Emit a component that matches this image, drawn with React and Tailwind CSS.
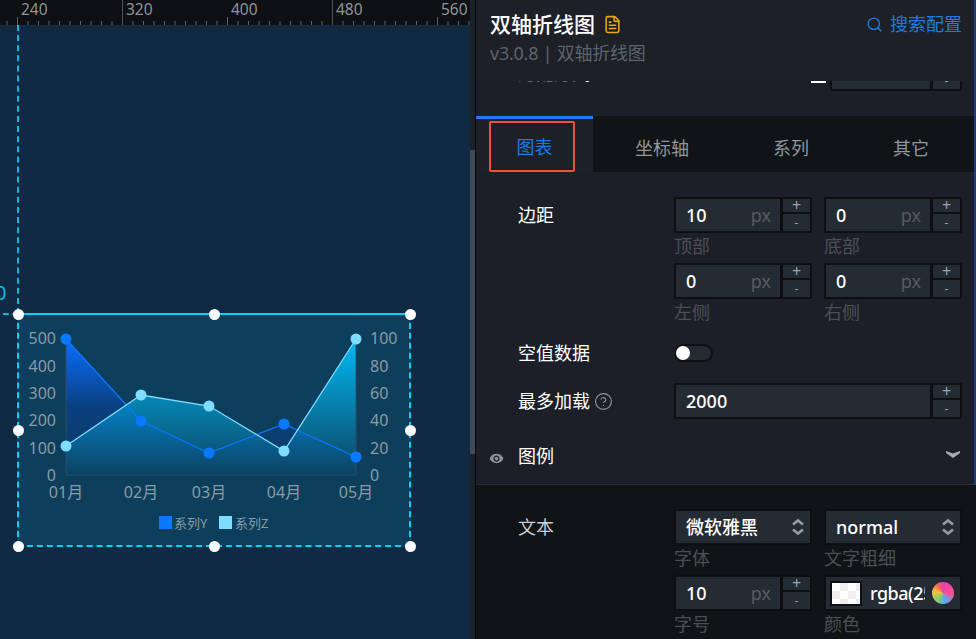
import { CircleHelp, FileText, Search } from "lucide-react";
import { MdRemoveRedEye } from "react-icons/md";

const FONT = "font-['Noto_Sans','Noto_Sans_CJK_SC',sans-serif]";

const MONTHS = ["01月", "02月", "03月", "04月", "05月"];
const XS = [66, 141, 209, 284, 356];
const SERIES_Y = [339, 421, 453, 424, 457];
const SERIES_Z = [446, 395, 406, 451, 339];
const LEFT_AXIS = [["500", 338], ["400", 366], ["300", 393], ["200", 420], ["100", 448], ["0", 475]];
const RIGHT_AXIS = [["100", 338], ["80", 366], ["60", 393], ["40", 420], ["20", 448], ["0", 475]];

const points = (ys) => ys.map((y, i) => `${XS[i]},${y}`).join(" ");

function Ruler() {
  const ticks = [];
  for (let i = -1; i < 44; i++) ticks.push(17.5 + i * 10.5);
  return (
    <div className="relative h-[25px] bg-[#0e1013]">
      <svg className="absolute inset-0" width="470" height="25">
        {ticks.map((x, i) => (
          <line key={i} x1={x} x2={x} y1="21" y2="25" stroke="#59626c" />
        ))}
        {[17.5, 227.5, 437.5].map((x) => (
          <line key={x} x1={x} x2={x} y1="17" y2="25" stroke="#59626c" />
        ))}
        {[122.5, 332.5].map((x) => (
          <line key={x} x1={x} x2={x} y1="0" y2="25" stroke="#4a5360" />
        ))}
      </svg>
      {[["240", 21], ["320", 126], ["400", 231], ["480", 336], ["560", 441]].map(([label, x]) => (
        <span
          key={label}
          className="absolute top-0 text-[15.5px] leading-[18px] text-[#8d949b]"
          style={{ left: x }}
        >
          {label}
        </span>
      ))}
    </div>
  );
}

function Chart() {
  return (
    <svg viewBox="19 315 390 230" className="block h-full w-full">
      <defs>
        <linearGradient id="areaY" x1="0" y1="0" x2="0" y2="1">
          <stop offset="0" stopColor="#0a6eff" />
          <stop offset="0.5" stopColor="#0a3f80" />
          <stop offset="1" stopColor="#0a3f80" stopOpacity="0" />
        </linearGradient>
        <linearGradient id="areaZ" x1="0" y1="0" x2="0" y2="1">
          <stop offset="0" stopColor="#00baf5" />
          <stop offset="1" stopColor="#00baf5" stopOpacity="0.03" />
        </linearGradient>
      </defs>
      <polygon points={`66,475 ${points(SERIES_Y)} 356,475`} fill="url(#areaY)" />
      <polygon points={`66,475 ${points(SERIES_Z)} 356,475`} fill="url(#areaZ)" />
      <polyline points="66,339 66,475 356,475 356,339" fill="none" stroke="#29506a" strokeWidth="1" />
      <polyline points={points(SERIES_Y)} fill="none" stroke="#0a78ff" strokeWidth="1.3" />
      <polyline points={points(SERIES_Z)} fill="none" stroke="#7fdcff" strokeWidth="1.3" />
      {XS.map((x, i) => (
        <circle key={x} cx={x} cy={SERIES_Y[i]} r="5.5" fill="#0a78ff" />
      ))}
      {XS.map((x, i) => (
        <circle key={x} cx={x} cy={SERIES_Z[i]} r="5.5" fill="#7fdcff" />
      ))}
      <g fill="#8a9aa6" fontSize="16">
        {LEFT_AXIS.map(([label, y]) => (
          <text key={label} x="56" y={y + 6} textAnchor="end">{label}</text>
        ))}
        {RIGHT_AXIS.map(([label, y]) => (
          <text key={label} x="370" y={y + 6}>{label}</text>
        ))}
        {MONTHS.map((label, i) => (
          <text key={label} x={XS[i]} y="498" textAnchor="middle">{label}</text>
        ))}
      </g>
      <rect x="159" y="516" width="13" height="13" fill="#0a78ff" />
      <rect x="219" y="516" width="13" height="13" fill="#7fdcff" />
      <g fill="#8a9aa6" fontSize="13">
        <text x="174" y="528">系列Y</text>
        <text x="235" y="528">系列Z</text>
      </g>
    </svg>
  );
}

function Handle({ className }) {
  return <span className={`absolute h-[11px] w-[11px] rounded-full bg-white ${className}`} />;
}

function Canvas() {
  return (
    <div className="relative w-[470px] flex-1 overflow-hidden bg-[#0f2a42]">
      <div className="absolute left-[17px] top-0 h-[289px] border-l-2 border-dashed border-[#00bde0]" />
      <div className="absolute left-[3px] top-[288px] w-[15px] border-t-2 border-dashed border-[#00bde0]" />
      <span className="absolute left-[-5px] top-[256px] text-[20px] leading-6 text-[#00c4e8]">0</span>
      <div className="absolute left-[17px] top-[288px] h-[234px] w-[394px] border-2 border-dashed border-[#00d4f5] bg-[#0d3f5c]">
        <div className="absolute left-[-2px] right-[-2px] top-[-2px] h-[2px] bg-[#00d4f5]" />
        <Chart />
        <Handle className="left-[-6px] top-[-6px]" />
        <Handle className="left-[190px] top-[-6px]" />
        <Handle className="right-[-7px] top-[-6px]" />
        <Handle className="left-[-6px] top-[110px]" />
        <Handle className="right-[-7px] top-[110px]" />
        <Handle className="bottom-[-7px] left-[-6px]" />
        <Handle className="bottom-[-7px] left-[190px]" />
        <Handle className="bottom-[-7px] right-[-7px]" />
      </div>
    </div>
  );
}

function StepButtons() {
  return (
    <div className="flex w-[30px] flex-col border-2 border-l-[1px] border-[#0e0f12] bg-[#252b33] text-[#9aa3ab]">
      <span className="flex h-[15px] items-center justify-center border-b-2 border-[#0e0f12] text-[16px] leading-[13px]">+</span>
      <span className="flex flex-1 items-center justify-center text-[12px] leading-[13px]">-</span>
    </div>
  );
}

function NumberField({ value, unit, hint, wide }) {
  return (
    <div className={wide ? "w-[288px]" : "w-[138px]"}>
      <div className="flex h-9">
        <div className="flex flex-1 items-center justify-between border-2 border-[#0e0f12] bg-[#252b33] pl-[10px] pr-[9px] text-[18px] font-medium text-white">
          <span>{value}</span>
          {unit && <span className="font-normal text-[#565c63]">{unit}</span>}
        </div>
        <StepButtons />
      </div>
      {hint && <p className="pb-1 text-[18px] leading-[26px] text-[#4b4f55]">{hint}</p>}
    </div>
  );
}

function SelectField({ value, hint }) {
  return (
    <div className="w-[138px]">
      <div className="flex h-9 items-center justify-between border-2 border-[#0e0f12] bg-[#252b33] pl-[10px] pr-[5px] text-[18px] font-medium text-white">
        <span>{value}</span>
        <svg width="14" height="18" viewBox="0 0 14 18" fill="none" stroke="#939da6" strokeWidth="2.6">
          <path d="M2 6.5 7 2.5 12 6.5" />
          <path d="M2 11.5 7 15.5 12 11.5" />
        </svg>
      </div>
      <p className="pb-1 text-[18px] leading-[26px] text-[#4b4f55]">{hint}</p>
    </div>
  );
}

function ColorField({ value, hint }) {
  return (
    <div className="w-[138px]">
      <div className="flex h-9 items-center border-2 border-[#0e0f12] bg-[#252b33] pl-1 pr-[6px]">
        <div className="h-[25px] w-8 shrink-0 border-2 border-[#0e0f12] bg-white bg-[repeating-conic-gradient(#eeeeee_0_25%,#ffffff_0_50%)] bg-[length:16px_16px]" />
        <span className="ml-2 w-[55px] overflow-hidden whitespace-nowrap text-[18px] font-medium tracking-[-0.5px] text-white">{value}</span>
        <span className="ml-auto h-[22px] w-[22px] shrink-0 rounded-full bg-[conic-gradient(#e83fb0,#ff4f8f_25%,#5aa8f5_45%,#8fd06a_62%,#f5c040_78%,#f06a50_90%,#e83fb0)]" />
      </div>
      <p className="pb-1 text-[18px] leading-[26px] text-[#4b4f55]">{hint}</p>
    </div>
  );
}

function Row({ label, children, className = "" }) {
  return (
    <div className={`flex ${className}`}>
      <div className="w-[198px] shrink-0 pl-[42px] text-[18px] leading-9">{label}</div>
      {children}
    </div>
  );
}

function Panel() {
  return (
    <div className="relative flex w-[500px] flex-col overflow-hidden bg-[#1c1f27]">
      <div className="absolute bottom-[154px] right-0 top-0 w-[2px] bg-[#1a3a7c]" />
      <header className="flex h-[81px] shrink-0 justify-between bg-[#1d2026] pl-[14px] pr-[14px] pt-[9px]">
        <div>
          <div className="flex items-center gap-2 text-[21px] font-medium leading-[30px] text-white">
            双轴折线图
            <FileText size={19} strokeWidth={2} className="text-[#e6a817]" aria-hidden="true" />
          </div>
          <p className="text-[18px] leading-[28px] tracking-[-0.25px] text-[#5b646c]">v3.0.8 | 双轴折线图</p>
        </div>
        <div className="flex h-[30px] items-center gap-[7px] text-[18px] text-[#1f7ae0]">
          <Search size={17} aria-hidden="true" />
          搜索配置
        </div>
      </header>

      <div className="h-[35px] shrink-0 overflow-hidden">
        <div className="-mt-[26px] flex h-9 pl-[42px] pr-[14px] text-[18px] leading-[36px] text-white">
          <span>适配方式</span>
          <div className="ml-auto flex">
            <div className="mr-1 mt-[26px] h-[2px] w-[15px] bg-white" />
            <div className="w-[102px] border-2 border-[#0e0f12] bg-[#252b33]" />
            <StepButtons />
          </div>
        </div>
      </div>

      <nav className="flex h-[56px] shrink-0 bg-[#111417] text-[18px] text-[#8e979f]">
        <div className="relative flex w-[117px] items-center justify-center border-t-[3px] border-[#1f7aff] bg-[#1d2026] pt-[3px] text-[#1f7ae0]">
          图表
          <div className="absolute bottom-0 left-[13px] top-[2px] w-[86px] rounded-[2px] border-2 border-[#e8553a]" />
        </div>
        <div className="flex w-[138px] items-center justify-center pt-2">坐标轴</div>
        <div className="flex w-[120px] items-center justify-center pt-2">系列</div>
        <div className="flex w-[120px] items-center justify-center pt-2">其它</div>
      </nav>

      <section className="h-[313px] shrink-0 border-b border-[#2a2d33] pt-[25px] text-white">
        <Row label="边距">
          <div className="grid w-[288px] grid-cols-2 gap-x-3">
            <NumberField value="10" unit="px" hint="顶部" />
            <NumberField value="0" unit="px" hint="底部" />
            <NumberField value="0" unit="px" hint="左侧" />
            <NumberField value="0" unit="px" hint="右侧" />
          </div>
        </Row>
        <Row label="空值数据" className="h-12 items-center">
          <div className="flex h-[18px] w-[39px] items-center rounded-full border-2 border-[#0e0f12] bg-[#252b33]">
            <span className="h-[14px] w-[14px] rounded-full bg-white" />
          </div>
        </Row>
        <Row
          label={
            <span className="flex items-center gap-1">
              最多加载
              <CircleHelp size={19} strokeWidth={1.5} className="text-[#8a939b]" aria-hidden="true" />
            </span>
          }
          className="h-12 items-center"
        >
          <NumberField value="2000" wide />
        </Row>
        <div className="relative flex h-[59px] items-center pl-[42px] pr-[16px] pt-1 text-[18px]">
          <MdRemoveRedEye size={15} className="absolute left-[13px] top-[26px] text-[#8a939b]" aria-hidden="true" />
          图例
          <svg className="mb-1 ml-auto" width="14" height="7" viewBox="0 0 14 7" fill="#a3acb4">
            <path d="M0 0 7 2.5 14 0 14 2 7 7 0 2Z" />
          </svg>
        </div>
      </section>

      <section className="flex-1 bg-[#101417] pt-6 text-[#c8cdd2]">
        <Row label="文本">
          <div className="grid w-[288px] grid-cols-2 gap-x-3">
            <SelectField value="微软雅黑" hint="字体" />
            <SelectField value="normal" hint="文字粗细" />
            <NumberField value="10" unit="px" hint="字号" />
            <ColorField value="rgba(255,255,255,1)" hint="颜色" />
          </div>
        </Row>
      </section>
    </div>
  );
}

export default function App() {
  return (
    <div className={`flex h-[639px] w-[976px] overflow-hidden bg-[#0e0f12] ${FONT}`}>
      <div className="flex w-[470px] flex-col">
        <Ruler />
        <Canvas />
      </div>
      <div className="w-[5px] bg-[#1b2128] pt-[150px]">
        <div className="h-[304px] bg-[#3f4b57]" />
      </div>
      <div className="w-px bg-[#08090b]" />
      <Panel />
    </div>
  );
}
